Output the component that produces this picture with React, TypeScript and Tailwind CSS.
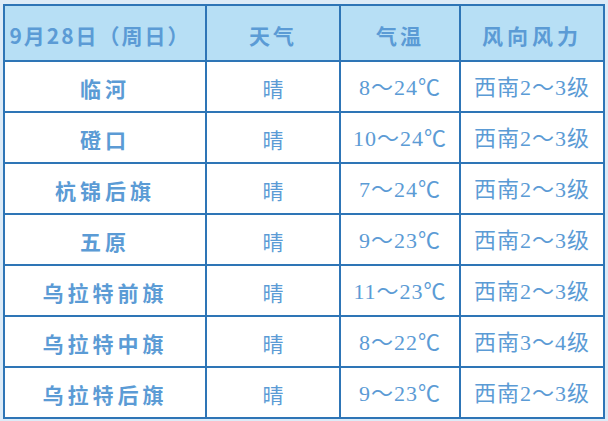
import React from 'react';

interface Row {
  name: string;
  weather: string;
  temp: string;
  wind: string;
}

const rows: Row[] = [
  { name: '临河', weather: '晴', temp: '8～24℃', wind: '西南2～3级' },
  { name: '磴口', weather: '晴', temp: '10～24℃', wind: '西南2～3级' },
  { name: '杭锦后旗', weather: '晴', temp: '7～24℃', wind: '西南2～3级' },
  { name: '五原', weather: '晴', temp: '9～23℃', wind: '西南2～3级' },
  { name: '乌拉特前旗', weather: '晴', temp: '11～23℃', wind: '西南2～3级' },
  { name: '乌拉特中旗', weather: '晴', temp: '8～22℃', wind: '西南3～4级' },
  { name: '乌拉特后旗', weather: '晴', temp: '9～23℃', wind: '西南2～3级' },
];

const sans = "font-['Noto_Sans_CJK_SC',sans-serif]";
const serif = "font-['Liberation_Serif','Noto_Sans_CJK_SC',serif]";

const App: React.FC = () => {
  return (
    <div className="w-[608px] h-[421px] bg-[#ddebf7] pt-[4px] pl-[3px]">
      <div className="grid grid-cols-[200px_132px_118px_142px] grid-rows-[54px_repeat(7,49px)] gap-[2px] p-[2px] bg-[#2e75b6] w-[602px] text-[#5b9bd5] text-[21px] leading-none">
        {/* Header */}
        <div className={`bg-[#b7dff5] flex items-center justify-center pt-[5px] pr-[10px] font-bold tracking-[2px] ${sans}`}>
          9月28日（周日）
        </div>
        <div className={`bg-[#b7dff5] flex items-center justify-center pt-[5px] font-bold tracking-[3px] ${sans}`}>
          天气
        </div>
        <div className={`bg-[#b7dff5] flex items-center justify-center pt-[5px] font-bold tracking-[3px] ${sans}`}>
          气温
        </div>
        <div className={`bg-[#b7dff5] flex items-center justify-center pt-[5px] font-bold tracking-[4px] ${sans}`}>
          风向风力
        </div>

        {rows.map((r) => (
          <React.Fragment key={r.name}>
            <div className={`bg-white flex items-center justify-center pt-[3px] font-bold tracking-[4px] ${sans}`}>
              {r.name}
            </div>
            <div className={`bg-white flex items-center justify-center pt-[3px] ${sans}`}>
              {r.weather}
            </div>
            <div className={`bg-white flex items-center justify-center pt-[3px] text-[22px] tracking-[1px] ${serif}`}>
              {r.temp}
            </div>
            <div className={`bg-white flex items-center justify-center pt-[3px] text-[22px] tracking-[1px] ${serif}`}>
              {r.wind}
            </div>
          </React.Fragment>
        ))}
      </div>
    </div>
  );
};

export default App;
